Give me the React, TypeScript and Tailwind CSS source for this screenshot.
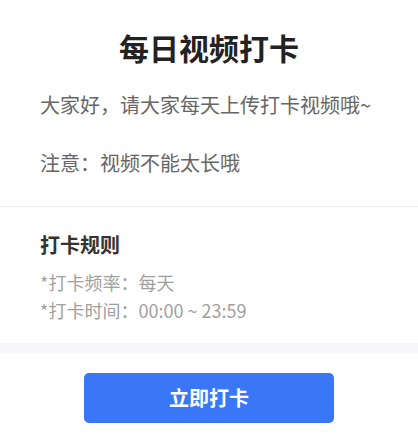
export default function App() {
  return (
    <div className="w-[418px] min-h-[445px] bg-white font-['Noto_Sans_CJK_SC',sans-serif]">
      {/* Intro */}
      <div className="px-10 pt-[26px] pb-[29px] border-b border-[#eeeeee]">
        <h1 className="text-center text-[30px] leading-[42px] font-bold text-[#222222]">
          每日视频打卡
        </h1>
        <p className="mt-[22px] text-[20px] leading-[29px] text-[#666666] whitespace-pre-line">
          {'大家好，请大家每天上传打卡视频哦~\n\n注意：视频不能太长哦'}
        </p>
      </div>

      {/* Rules */}
      <div className="px-10 pt-[24px] pb-[19px]">
        <h2 className="text-[20px] leading-[28px] font-bold text-[#333333]">打卡规则</h2>
        <div className="mt-[9px] text-[18px] leading-[28px] text-[#a0a0a0]">
          <p>*打卡频率：每天</p>
          <p>*打卡时间：00:00 ~ 23:59</p>
        </div>
      </div>

      <div className="h-[10px] bg-[#f5f6fa]" />

      <div className="flex justify-center pt-[20px] pb-[21px]">
        <button className="w-[250px] h-[50px] rounded-[5px] bg-[#3a77f6] text-white text-[20px] font-bold">
          立即打卡
        </button>
      </div>
    </div>
  );
}
